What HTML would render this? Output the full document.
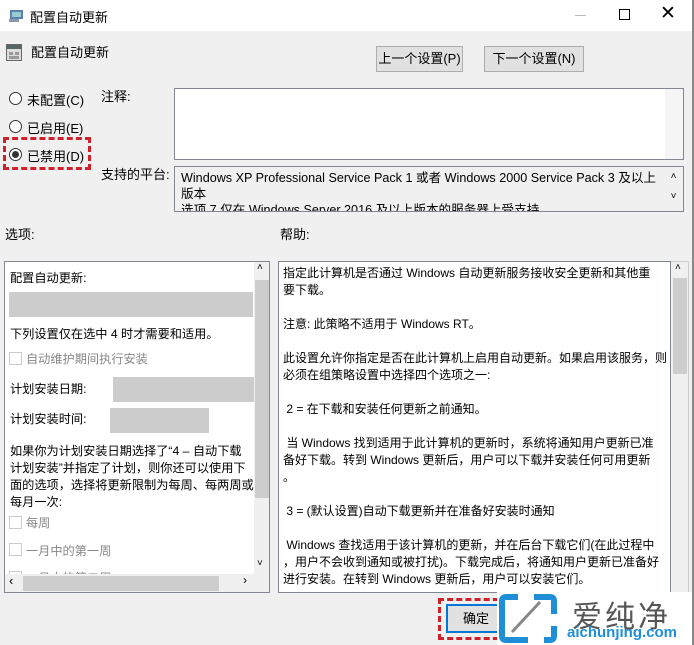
<!DOCTYPE html>
<html><head><meta charset="utf-8"><style>
*{margin:0;padding:0;box-sizing:border-box}
body{width:694px;height:645px;overflow:hidden;background:#f0f0f0;font-family:"Liberation Sans","Noto Sans CJK SC",sans-serif;font-size:13px;color:#000;position:relative}
.a{position:absolute;white-space:nowrap}
.btn{position:absolute;background:#e1e1e1;border:1px solid #adadad;text-align:center;line-height:23px}
.box{position:absolute;background:#fff;border:1px solid #828790}
.rad{position:absolute;width:13px;height:13px;border:1px solid #333;border-radius:50%;background:#fff}
.cb{position:absolute;width:13px;height:13px;border:1px solid #ccc;background:#fff}
.g{color:#888}
.sb{position:absolute;background:#f0f0f0}
.t{font-size:12.2px}
</style></head><body>
<div class="a" style="left:0;top:0;width:694px;height:31px;background:#fff"></div>
<div class="a" style="left:692px;top:0;width:2px;height:645px;background:#888"></div>
<svg class="a" style="left:8px;top:7px" width="17" height="16"><rect x="2" y="3" width="13" height="9" fill="#5a7fb0"/><rect x="4" y="5" width="9" height="5" fill="#9cc"/><rect x="1" y="12" width="10" height="3" fill="#8899aa"/></svg>
<div class="a" style="left:30px;top:7px">配置自动更新</div>
<div class="a" style="left:575px;top:15px;width:11px;height:1px;background:#bbb"></div>
<div class="a" style="left:619px;top:9px;width:11px;height:11px;border:1px solid #000"></div>
<div class="a" style="left:660px;top:2px;font-size:19px">✕</div>
<svg class="a" style="left:6px;top:44px" width="16" height="17"><rect x="0.5" y="0.5" width="15" height="16" fill="#ddd" stroke="#666"/><rect x="1" y="1" width="14" height="4" fill="#566"/><rect x="3" y="8" width="4" height="3" fill="#999"/><rect x="9" y="8" width="4" height="3" fill="#999"/><rect x="3" y="12" width="10" height="3" fill="#999"/></svg>
<div class="a" style="left:31px;top:42px">配置自动更新</div>
<div class="btn" style="left:376px;top:46px;width:87px;height:26px">上一个设置(P)</div>
<div class="btn" style="left:484px;top:46px;width:100px;height:26px">下一个设置(N)</div>
<div class="rad" style="left:9px;top:92px"></div><div class="a" style="left:27px;top:90px">未配置(C)</div>
<div class="rad" style="left:9px;top:120px"></div><div class="a" style="left:27px;top:118px">已启用(E)</div>
<div class="rad" style="left:9px;top:148px"></div><div class="a" style="left:12px;top:151px;width:7px;height:7px;border-radius:50%;background:#333"></div><div class="a" style="left:27px;top:146px">已禁用(D)</div>
<div class="a" style="left:3px;top:137px;width:88px;height:33px;border:3px dashed #d0202a"></div>
<div class="a" style="left:101px;top:86px">注释:</div>
<div class="box" style="left:174px;top:88px;width:510px;height:72px"></div>
<div class="sb" style="left:665px;top:89px;width:18px;height:70px;background:#f5f5f5"></div>
<div class="a" style="left:101px;top:164px">支持的平台:</div>
<div class="box" style="left:174px;top:166px;width:510px;height:46px;overflow:hidden;background:#f0f0f0"><div style="position:absolute;left:6px;top:3px;line-height:16px;font-size:12.6px">Windows XP Professional Service Pack 1 或者 Windows 2000 Service Pack 3 及以上<br>版本<br>选项 7 仅在 Windows Server 2016 及以上版本的服务器上受支持</div><div style="position:absolute;right:0;top:0;width:19px;height:46px;background:#f0f0f0;font-size:10px;text-align:center;line-height:20px">˄<br>˅</div></div>
<div class="a" style="left:5px;top:224px">选项:</div>
<div class="a" style="left:280px;top:224px">帮助:</div>
<div class="box t" style="left:4px;top:261px;width:266px;height:332px;overflow:hidden">
<div class="a" style="left:5px;top:6px">配置自动更新:</div>
<div class="a" style="left:4px;top:30px;width:244px;height:25px;background:#ccc"></div>
<div class="a" style="left:5px;top:62px">下列设置仅在选中 4 时才需要和适用。</div>
<div class="cb" style="left:4px;top:90px"></div><div class="a g" style="left:21px;top:87px">自动维护期间执行安装</div>
<div class="a" style="left:5px;top:117px">计划安装日期:</div>
<div class="a" style="left:108px;top:115px;width:144px;height:25px;background:#ccc"></div>
<div class="a" style="left:5px;top:147px">计划安装时间:</div>
<div class="a" style="left:105px;top:146px;width:99px;height:25px;background:#ccc"></div>
<div class="a" style="left:5px;top:181px;line-height:17px">如果你为计划安装日期选择了“4 – 自动下载<br>计划安装”并指定了计划，则你还可以使用下<br>面的选项，选择将更新限制为每周、每两周或<br>每月一次:</div>
<div class="cb" style="left:4px;top:254px"></div><div class="a g" style="left:21px;top:251px">每周</div>
<div class="cb" style="left:4px;top:281px"></div><div class="a g" style="left:21px;top:279px">一月中的第一周</div>
<div class="cb" style="left:4px;top:309px"></div><div class="a g" style="left:21px;top:306px">一月中的第二周</div>
<div class="sb" style="left:249px;top:0;width:16px;height:312px"></div>
<div class="a" style="left:250px;top:18px;width:14px;height:218px;background:#cdcdcd"></div>
<div class="a" style="left:252px;top:0;font-size:10px">˄</div>
<div class="a" style="left:252px;top:296px;font-size:10px">˅</div>
<div class="sb" style="left:0;top:312px;width:265px;height:19px"></div>
<div class="a" style="left:18px;top:314px;width:196px;height:15px;background:#cdcdcd"></div>
<div class="a" style="left:4px;top:311px;font-size:13px">‹</div><div class="a" style="left:238px;top:311px">›</div>
</div>
<div class="box" style="left:278px;top:261px;width:393px;height:332px;overflow:hidden;font-size:12px">
<div class="a" style="left:4px;top:3px;line-height:17px">指定此计算机是否通过 Windows 自动更新服务接收安全更新和其他重<br>要下载。<br><br>注意: 此策略不适用于 Windows RT。<br><br>此设置允许你指定是否在此计算机上启用自动更新。如果启用该服务，则<br>必须在组策略设置中选择四个选项之一:<br><br>&nbsp;2 = 在下载和安装任何更新之前通知。<br><br>&nbsp;当 Windows 找到适用于此计算机的更新时，系统将通知用户更新已准<br>备好下载。转到 Windows 更新后，用户可以下载并安装任何可用更新<br>。<br><br>&nbsp;3 = (默认设置)自动下载更新并在准备好安装时通知<br><br>&nbsp;Windows 查找适用于该计算机的更新，并在后台下载它们(在此过程中<br>，用户不会收到通知或被打扰)。下载完成后，将通知用户更新已准备好<br>进行安装。在转到 Windows 更新后，用户可以安装它们。</div>
</div>
<div class="sb" style="left:671px;top:261px;width:18px;height:332px;border:1px solid #ccc;border-left:none"></div>
<div class="a" style="left:673px;top:278px;width:14px;height:96px;background:#cdcdcd"></div>
<div class="a" style="left:675px;top:262px;font-size:10px">˄</div>
<div class="btn" style="left:446px;top:604px;width:60px;height:29px;border:2px solid #0078d7;line-height:25px">确定</div>
<div class="a" style="left:438px;top:598px;width:70px;height:42px;border:3px dashed #d0202a;border-right:none"></div>
<div class="a" style="left:497px;top:592px;width:195px;height:53px;background:#fff"></div>
<svg class="a" style="left:498px;top:592px" width="62" height="53"><path d="M20 5 H8 Q4 5 4 9 V44 Q4 48 8 48 H30 M36 5 H52 Q56 5 56 9 V22 M56 34 V44 Q56 48 52 48 H46" fill="none" stroke="#1e8fd6" stroke-width="6"/><path d="M14 40 L42 10" stroke="#888" stroke-width="3"/></svg>
<div class="a" style="left:572px;top:592px;font-size:30px;color:#555;letter-spacing:3px">爱纯净</div>
<div class="a" style="left:567px;top:624px;font-size:15px;color:#1e8fd6;font-weight:bold">aichunjing.com</div>
</body></html>
